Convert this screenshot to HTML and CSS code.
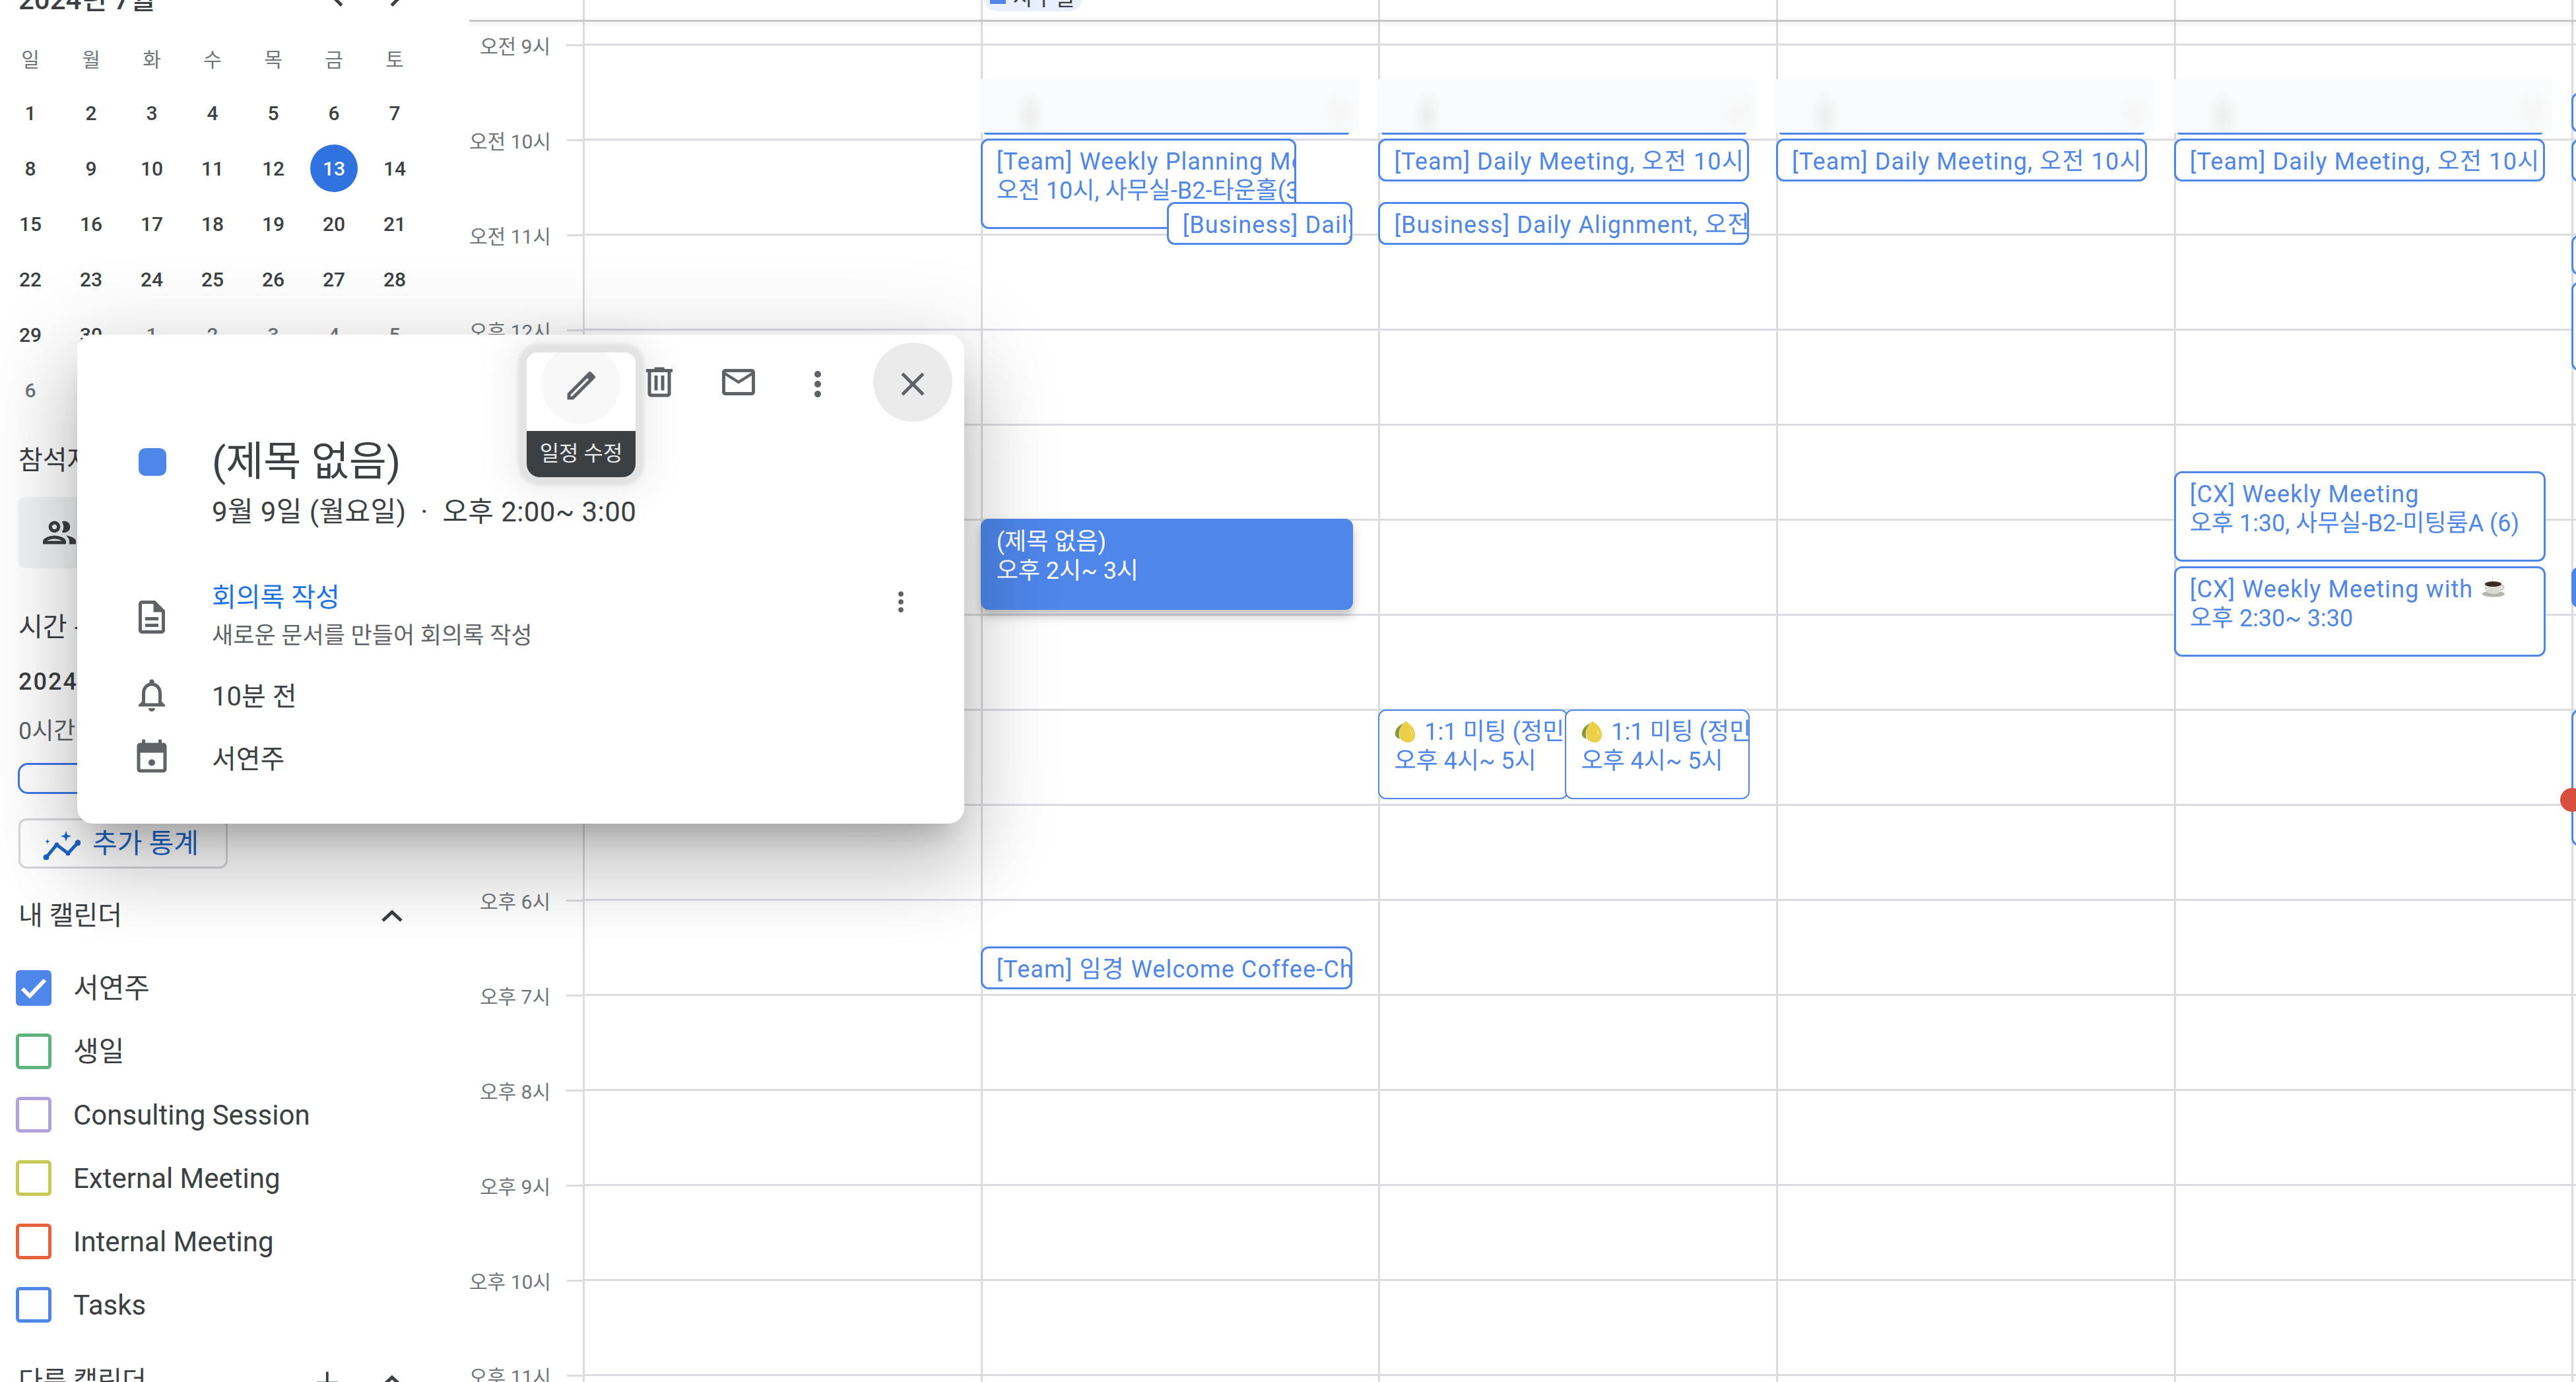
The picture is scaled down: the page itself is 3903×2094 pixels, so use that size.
FILE: index.html
```html
<!DOCTYPE html>
<html lang="ko">
<head>
    <meta charset="UTF-8">
    <title>Calendar</title>
    <link rel="stylesheet" href="styles.css">
</head>
<body>
<div class="page">
    <aside class="sidebar">
        <div class="mini-head">
            <span class="mini-title">2024년 7월</span>
            <svg class="mini-arrow arrow-prev" viewBox="0 0 24 24"><path d="M15.4 7.4 14 6l-6 6 6 6 1.4-1.4L10.8 12z"/></svg>
            <svg class="mini-arrow arrow-next" viewBox="0 0 24 24"><path d="M8.6 16.6 10 18l6-6-6-6-1.4 1.4L13.2 12z"/></svg>
        </div>
        <div class="mini-grid">
            <span class="wd">일</span><span class="wd">월</span><span class="wd">화</span><span class="wd">수</span><span class="wd">목</span><span class="wd">금</span><span class="wd">토</span>
            <span>1</span><span>2</span><span>3</span><span>4</span><span>5</span><span>6</span><span>7</span>
            <span>8</span><span>9</span><span>10</span><span>11</span><span>12</span><span><b class="today">13</b></span><span>14</span>
            <span>15</span><span>16</span><span>17</span><span>18</span><span>19</span><span>20</span><span>21</span>
            <span>22</span><span>23</span><span>24</span><span>25</span><span>26</span><span>27</span><span>28</span>
            <span>29</span><span>30</span><span class="dim">1</span><span class="dim">2</span><span class="dim">3</span><span class="dim">4</span><span class="dim">5</span>
            <span class="dim">6</span><span class="dim">7</span><span class="dim">8</span><span class="dim">9</span><span class="dim">10</span><span class="dim">11</span><span class="dim">12</span>
        </div>

        <div class="side-title people-title">참석자 검색</div>
        <div class="people-box">
            <svg viewBox="0 0 24 24"><path d="M9 13.75c-2.34 0-7 1.17-7 3.5V19h14v-1.75c0-2.33-4.66-3.5-7-3.5zM4.34 17c.84-.58 2.87-1.25 4.66-1.25s3.82.67 4.66 1.25H4.34zM9 12c1.93 0 3.5-1.57 3.5-3.5S10.93 5 9 5 5.5 6.57 5.5 8.5 7.07 12 9 12zm0-5c.83 0 1.5.67 1.5 1.5S9.83 10 9 10s-1.5-.67-1.5-1.5S8.17 7 9 7zm7.04 6.81c1.16.84 1.96 1.96 1.96 3.44V19h4v-1.75c0-2.02-3.5-3.17-5.96-3.44zM15 12c1.93 0 3.5-1.57 3.5-3.5S16.93 5 15 5c-.54 0-1.04.13-1.5.35.63.89 1 1.98 1 3.15s-.37 2.26-1 3.15c.46.22.96.35 1.5.35z"/></svg>
        </div>
        <div class="side-title time-title">시간 통계</div>
        <div class="stat-date">2024년 7월</div>
        <div class="stat-hours">0시간</div>
        <div class="stat-bar"></div>
        <div class="stat-button">
            <svg viewBox="0 0 60 50">
                <path class="spark-line" d="M8 46 24 27 41 40 56 24"/>
                <circle cx="8" cy="46" r="4.5"/><circle cx="24" cy="27" r="3.5"/><circle cx="41" cy="40" r="3.5"/><circle cx="56" cy="24" r="4.5"/>
                <path d="M38 6l2 6 6 2-6 2-2 6-2-6-6-2 6-2zM10 18l1 3 3 1-3 1-1 3-1-3-3-1 3-1z"/>
            </svg>
            <span>추가 통계</span>
        </div>

        <div class="side-title cal-head my-cal-head">
            <span>내 캘린더</span>
            <svg class="chev" viewBox="0 0 34 20"><path d="M3 17 17 4l14 13"/></svg>
        </div>
        <ul class="cal-list">
            <li><i class="check check-blue checked"><svg viewBox="0 0 54 54"><path d="M10 28l11 11 23-24"/></svg></i><span class="ko-label">서연주</span></li>
            <li><i class="check check-green"></i><span class="ko-label">생일</span></li>
            <li><i class="check check-purple"></i>Consulting Session</li>
            <li><i class="check check-lime"></i>External Meeting</li>
            <li><i class="check check-orange"></i>Internal Meeting</li>
            <li><i class="check check-blue"></i>Tasks</li>
        </ul>
        <div class="side-title cal-head other-cal-head">
            <span>다른 캘린더</span>
            <span class="plus">+</span>
            <svg class="chev" viewBox="0 0 34 20"><path d="M3 17 17 4l14 13"/></svg>
        </div>
    </aside>

    <main class="calendar">
        <div class="gutter">
            <div class="hour"><span>오전 9시</span><i></i></div>
            <div class="hour"><span>오전 10시</span><i></i></div>
            <div class="hour"><span>오전 11시</span><i></i></div>
            <div class="hour"><span>오후 12시</span><i></i></div>
            <div class="hour"><span>오후 1시</span><i></i></div>
            <div class="hour"><span>오후 2시</span><i></i></div>
            <div class="hour"><span>오후 3시</span><i></i></div>
            <div class="hour"><span>오후 4시</span><i></i></div>
            <div class="hour"><span>오후 5시</span><i></i></div>
            <div class="hour"><span>오후 6시</span><i></i></div>
            <div class="hour"><span>오후 7시</span><i></i></div>
            <div class="hour"><span>오후 8시</span><i></i></div>
            <div class="hour"><span>오후 9시</span><i></i></div>
            <div class="hour"><span>오후 10시</span><i></i></div>
            <div class="hour"><span>오후 11시</span><i></i></div>
        </div>
        <div class="days">
            <div class="day"></div>

            <div class="day">
                <div class="allday-chip"><i></i>사무실</div>
                <div class="redacted"></div>
                <div class="event ev-planning"><span class="ev-title">[Team] Weekly Planning Meeting</span><br>오전 10시, 사무실-B2-타운홀(32)</div>
                <div class="event ev-business-short"><span class="ev-title">[Business] Daily Alignment, 오전 11시</span></div>
                <div class="event ev-selected">(제목 없음)<br>오후 2시~ 3시</div>
                <div class="event ev-welcome"><span class="ev-title">[Team] 임경 Welcome Coffee-Chat, 오후 7시</span></div>
            </div>

            <div class="day">
                <div class="redacted"></div>
                <div class="event ev-daily"><span class="ev-title">[Team] Daily Meeting, 오전 10시</span></div>
                <div class="event ev-business"><span class="ev-title">[Business] Daily Alignment, 오전 11시</span></div>
                <div class="event ev-one ev-one-a">
                    <svg class="lemon" viewBox="0 0 35 34"><path class="lemon-body" d="M18 1c9 5 15 14 14 22-1 7-6 10-11 10-7 0-13-5-13-14C8 11 12 5 18 1z"/><path class="lemon-shine" d="M24 12c3 4 4 8 3 12-1-4-2-8-3-12z"/><path class="lemon-leaf" d="M14 4C6 8 1 14 2 22c1 3 4 5 7 5-3-8-1-16 5-23z"/></svg>
                    1:1 미팅 (정민수)<br>오후 4시~ 5시
                </div>
                <div class="event ev-one ev-one-b">
                    <svg class="lemon" viewBox="0 0 35 34"><path class="lemon-body" d="M18 1c9 5 15 14 14 22-1 7-6 10-11 10-7 0-13-5-13-14C8 11 12 5 18 1z"/><path class="lemon-shine" d="M24 12c3 4 4 8 3 12-1-4-2-8-3-12z"/><path class="lemon-leaf" d="M14 4C6 8 1 14 2 22c1 3 4 5 7 5-3-8-1-16 5-23z"/></svg>
                    1:1 미팅 (정민수)<br>오후 4시~ 5시
                </div>
            </div>

            <div class="day">
                <div class="redacted"></div>
                <div class="event ev-daily"><span class="ev-title">[Team] Daily Meeting, 오전 10시</span></div>
            </div>

            <div class="day">
                <div class="redacted"></div>
                <div class="event ev-daily"><span class="ev-title">[Team] Daily Meeting, 오전 10시</span></div>
                <div class="event ev-cx-a"><span class="ev-title">[CX] Weekly Meeting</span><br>오후 1:30, 사무실-B2-미팅룸A (6)</div>
                <div class="event ev-cx-b"><span class="ev-title">[CX] Weekly Meeting with</span> <svg class="coffee" viewBox="0 0 36 32"><path class="coffee-steam" d="M16 1c3 2-2 4 1 7"/><ellipse class="coffee-saucer" cx="18" cy="27" rx="17" ry="4.5"/><path class="coffee-cup" d="M5 12h25v6c0 6-5 9-12 9S5 24 5 18z"/><path class="coffee-handle" d="M29 14c5-1 6 5 0 7"/><ellipse class="coffee-top" cx="17.5" cy="12" rx="12.5" ry="4"/></svg><br>오후 2:30~ 3:30</div>
            </div>

            <div class="day day-last">
                <div class="event edge edge-1"></div>
                <div class="event edge edge-2"></div>
                <div class="event edge edge-3"></div>
                <div class="event edge edge-4"></div>
                <div class="event edge edge-5"></div>
                <div class="event edge edge-6"></div>
                <div class="now-dot"></div>
            </div>
        </div>
        <div class="allday-line"></div>
    </main>

    <section class="popup">
        <div class="toolbar">
            <span class="tool"><svg viewBox="0 0 24 24"><path d="M15 4V3H9v1H4v2h1v13c0 1.1.9 2 2 2h10c1.1 0 2-.9 2-2V6h1V4h-5zm2 15H7V6h10v13zM9 8h2v9H9zm4 0h2v9h-2z"/></svg></span>
            <span class="tool"><svg viewBox="0 0 24 24"><path d="M20 4H4c-1.1 0-2 .9-2 2v12c0 1.1.9 2 2 2h16c1.1 0 2-.9 2-2V6c0-1.1-.9-2-2-2zm0 14H4V8l8 5 8-5v10zm-8-7L4 6h16l-8 5z"/></svg></span>
            <span class="tool tool-low"><svg viewBox="0 0 24 24"><path d="M12 8c1.1 0 2-.9 2-2s-.9-2-2-2-2 .9-2 2 .9 2 2 2zm0 2c-1.1 0-2 .9-2 2s.9 2 2 2 2-.9 2-2-.9-2-2-2zm0 6c-1.1 0-2 .9-2 2s.9 2 2 2 2-.9 2-2-.9-2-2-2z"/></svg></span>
            <span class="tool tool-close tool-low"><svg viewBox="0 0 24 24"><path d="M19 6.41 17.59 5 12 10.59 6.41 5 5 6.41 10.59 12 5 17.59 6.41 19 12 13.41 17.59 19 19 17.59 13.41 12z"/></svg></span>
        </div>

        <div class="edit-tip">
            <div class="edit-face">
                <span class="edit-circle"><svg viewBox="0 0 24 24"><path fill-rule="evenodd" d="M3 17.25V21h3.75L19.6 8.15a1.2 1.2 0 0 0 0-1.7l-2.05-2.05a1.2 1.2 0 0 0-1.7 0zM5 19v-.9L15.1 8l.9.9L5.9 19z"/></svg></span>
            </div>
            <div class="edit-label">일정 수정</div>
        </div>

        <div class="row row-title">
            <div class="row-icon"><i class="color-square"></i></div>
            <h1>(제목 없음)</h1>
        </div>
        <div class="row row-when">
            <div class="row-icon"></div>
            <div>9월 9일 (월요일) &nbsp;·&nbsp; 오후 2:00~ 3:00</div>
        </div>
        <div class="row row-notes">
            <div class="row-icon"><svg viewBox="0 0 24 24"><path d="M14 2H6c-1.1 0-2 .9-2 2v16c0 1.1.9 2 2 2h12c1.1 0 2-.9 2-2V8l-6-6zM6 20V4h7v5h5v11H6zm10-2H8v-2h8v2zm0-4H8v-2h8v2z"/></svg></div>
            <div class="notes-text">
                <div class="notes-link">회의록 작성</div>
                <div class="notes-desc">새로운 문서를 만들어 회의록 작성</div>
            </div>
            <svg class="notes-more" viewBox="0 0 24 24"><path d="M12 8c1.1 0 2-.9 2-2s-.9-2-2-2-2 .9-2 2 .9 2 2 2zm0 2c-1.1 0-2 .9-2 2s.9 2 2 2 2-.9 2-2-.9-2-2-2zm0 6c-1.1 0-2 .9-2 2s.9 2 2 2 2-.9 2-2-.9-2-2-2z"/></svg>
        </div>
        <div class="row row-plain row-reminder">
            <div class="row-icon"><svg viewBox="0 0 24 24"><path d="M12 22c1.1 0 2-.9 2-2h-4c0 1.1.9 2 2 2zm6-6v-5c0-3.07-1.63-5.64-4.5-6.32V4c0-.83-.67-1.5-1.5-1.5s-1.5.67-1.5 1.5v.68C7.64 5.36 6 7.92 6 11v5l-2 2v1h16v-1l-2-2zm-2 1H8v-6c0-2.48 1.51-4.5 4-4.5s4 2.02 4 4.5v6z"/></svg></div>
            <div>10분 전</div>
        </div>
        <div class="row row-plain">
            <div class="row-icon"><svg viewBox="0 0 24 24"><path fill-rule="evenodd" d="M19 3h-1V1h-2v2H8V1H6v2H5c-1.11 0-2 .9-2 2v14c0 1.1.89 2 2 2h14c1.1 0 2-.9 2-2V5c0-1.1-.9-2-2-2zm0 16H5V9h14v10z"/><circle cx="12" cy="15" r="2"/></svg></div>
            <div>서연주</div>
        </div>
    </section>
</div>
</body>
</html>
```

FILE: styles.css
```css
* {
    box-sizing: border-box;
}
html, body {
    margin: 0;
    height: 100%;
}
body {
    background: #fff;
    color: #3c4043;
    font-family: Roboto, "Noto Sans CJK KR", sans-serif;
    overflow: hidden;
}
.page {
    position: relative;
    display: flex;
    width: 3903px;
    height: 2094px;
    overflow: hidden;
}

/* left column */
.sidebar {
    flex: none;
    width: 711px;
    height: 2094px;
    overflow: hidden;
}
.mini-head {
    position: relative;
    display: flex;
    align-items: center;
    height: 48px;
    margin-top: -29px;
    padding-left: 28px;
}
.mini-title {
    font-size: 42px;
    font-weight: 500;
}
.mini-arrow {
    position: absolute;
    top: -6px;
    width: 60px;
    height: 60px;
    fill: #3c4043;
}
.arrow-prev {
    left: 481px;
}
.arrow-next {
    left: 570px;
}
.mini-grid {
    display: grid;
    grid-template-columns: repeat(7, 92px);
    grid-template-rows: 82px repeat(6, 84px);
    margin-top: 28px;
    font-size: 30px;
    font-weight: 500;
}
.mini-grid span {
    display: flex;
    align-items: center;
    justify-content: center;
}
.mini-grid .wd {
    color: #70757a;
    font-weight: 400;
}
.mini-grid .dim {
    color: #70757a;
}
.today {
    display: flex;
    align-items: center;
    justify-content: center;
    width: 72px;
    height: 72px;
    border-radius: 50%;
    background: #3073e0;
    color: #fff;
    font-weight: 500;
}
.side-title {
    padding-left: 28px;
    height: 50px;
    line-height: 50px;
    font-size: 40px;
    white-space: nowrap;
}
.people-title {
    margin-top: 40px;
}
.people-box {
    display: flex;
    align-items: center;
    width: 400px;
    height: 108px;
    margin: 30px 0 0 27px;
    padding-left: 33px;
    background: #f1f3f4;
    border-radius: 12px;
}
.people-box svg {
    width: 60px;
    height: 60px;
    fill: #3c4043;
}
.time-title {
    margin-top: 65px;
}
.stat-date {
    margin-top: 35px;
    padding-left: 28px;
    height: 44px;
    line-height: 44px;
    font-size: 36px;
    font-weight: 500;
    letter-spacing: 2px;
}
.stat-hours {
    margin-top: 31px;
    padding-left: 28px;
    height: 44px;
    line-height: 44px;
    font-size: 36px;
    color: #5f6368;
}
.stat-bar {
    width: 400px;
    height: 47px;
    margin: 26px 0 0 27px;
    border: 3px solid #3b78e7;
    border-radius: 15px;
}
.stat-button {
    display: flex;
    align-items: center;
    gap: 18px;
    width: 317px;
    height: 76px;
    margin: 37px 0 0 28px;
    padding-left: 31px;
    border: 3px solid #d4d6d9;
    border-radius: 12px;
    color: #1b66c9;
    font-size: 41px;
}
.stat-button span {
    margin-top: -8px;
}
.stat-button svg {
    flex: none;
    width: 60px;
    height: 50px;
    fill: #1b66c9;
}
.spark-line {
    fill: none;
    stroke: #1b66c9;
    stroke-width: 5;
}
.cal-head {
    position: relative;
    display: flex;
    align-items: center;
}
.my-cal-head {
    margin-top: 47px;
}
.chev {
    position: absolute;
    left: 577px;
    top: 15px;
    width: 34px;
    height: 20px;
    fill: none;
    stroke: #3c4043;
    stroke-width: 5;
}
.cal-list {
    list-style: none;
    margin: 36px 0 0;
    padding: 0;
}
.cal-list li {
    display: flex;
    align-items: center;
    height: 96px;
    padding-left: 24px;
    font-size: 42px;
    white-space: nowrap;
}
.ko-label {
    margin-top: -8px;
}
.check {
    flex: none;
    width: 54px;
    height: 54px;
    margin-right: 33px;
    border: 5px solid;
    border-radius: 6px;
}
.check-blue {
    border-color: #4f86ea;
}
.check-green {
    border-color: #5cb57f;
}
.check-purple {
    border-color: #b1a0dc;
}
.check-lime {
    border-color: #c7c952;
}
.check-orange {
    border-color: #e9613a;
}
.checked {
    background: #4f86ea;
    border: 0;
}
.checked svg {
    display: block;
    fill: none;
    stroke: #fff;
    stroke-width: 6;
}
.other-cal-head {
    margin-top: 43px;
}
.plus {
    position: absolute;
    left: 478px;
    top: -2px;
    font-size: 64px;
    font-weight: 300;
    line-height: 60px;
}

/* time grid */
.calendar {
    position: relative;
    flex: 1;
    display: flex;
    min-width: 0;
}
.gutter {
    flex: none;
    width: 175px;
    padding-top: 67px;
    border-right: 3px solid #dadce0;
}
.hour {
    display: flex;
    justify-content: flex-end;
    gap: 24px;
    height: 144px;
}
.hour span {
    height: 36px;
    margin-top: -14px;
    line-height: 36px;
    font-size: 30px;
    color: #70757a;
    white-space: nowrap;
}
.hour i {
    width: 25px;
    height: 3px;
    background: #dadce0;
}
.days {
    flex: 1;
    display: flex;
    min-width: 0;
    background-image: repeating-linear-gradient(#dadce0 0 3px, transparent 3px 144px);
    background-position: 0 66px;
    background-repeat: no-repeat;
    background-size: 100% 2100px;
}
.day {
    position: relative;
    flex: none;
    width: 602.7px;
    height: 2094px;
    border-right: 3px solid #dadce0;
}
.day-last {
    border-right: 0;
    width: 10px;
}
.allday-line {
    position: absolute;
    top: 30px;
    left: 0;
    right: 0;
    height: 3px;
    background: #c6c7c8;
    box-shadow: 0 3px 6px rgba(0, 0, 0, .1);
}
.allday-chip {
    position: absolute;
    left: 2px;
    top: -30px;
    display: flex;
    align-items: center;
    gap: 11px;
    width: 149px;
    height: 47px;
    padding-left: 9px;
    border-radius: 0 0 20px 20px;
    background: #e8effe;
    font-size: 34px;
}
.allday-chip i {
    width: 24px;
    height: 24px;
    background: #4f86ea;
}
.redacted {
    position: absolute;
    left: -5px;
    top: 120px;
    width: 575px;
    height: 81px;
    background:
        radial-gradient(ellipse 24px 42px at 76px 56px, #ecedec, rgba(236, 237, 236, 0)),
        radial-gradient(ellipse 30px 40px at 545px 50px, #f6f6f6, rgba(246, 246, 246, 0)),
        #fafbfc;
}
.redacted::after {
    content: "";
    position: absolute;
    left: 7px;
    right: 15px;
    bottom: -3px;
    height: 3px;
    border-radius: 0 0 6px 6px;
    background: #4f86ea;
}

/* events */
.event {
    position: absolute;
    left: -3px;
    overflow: hidden;
    padding: 10px 0 0 21px;
    background: #fff;
    border: 3px solid #4f86ea;
    border-radius: 12px;
    color: #4f86ea;
    font-size: 36px;
    line-height: 44px;
    white-space: nowrap;
}
.ev-title {
    letter-spacing: 1.1px;
}
.ev-planning {
    top: 210px;
    width: 478px;
    height: 137px;
}
.ev-business-short {
    top: 306px;
    left: 279px;
    width: 281px;
    height: 65px;
}
.ev-selected {
    top: 786px;
    width: 564px;
    height: 138px;
    padding-top: 10px;
    background: #4f86ea;
    color: #fff;
    box-shadow: 0 9px 15px rgba(0, 0, 0, .25);
}
.ev-welcome {
    top: 1434px;
    width: 563px;
    height: 65px;
}
.ev-daily {
    top: 210px;
    width: 562px;
    height: 65px;
}
.ev-business {
    top: 306px;
    width: 562px;
    height: 65px;
}
.ev-one {
    top: 1075px;
    height: 136px;
    border-width: 2px;
    padding: 10px 0 0 22px;
}
.ev-one-a {
    width: 288px;
}
.ev-one-b {
    left: 280px;
    width: 280px;
}
.ev-cx-a {
    top: 714px;
    width: 563px;
    height: 137px;
}
.ev-cx-b {
    top: 858px;
    width: 563px;
    height: 137px;
}
.lemon {
    width: 35px;
    height: 34px;
    margin-right: 2px;
    vertical-align: -5px;
}
.lemon-body {
    fill: #edd04a;
}
.lemon-shine {
    fill: #f7e88c;
}
.lemon-leaf {
    fill: #7f9a3a;
}
.coffee {
    width: 36px;
    height: 32px;
    margin-left: 4px;
    vertical-align: 0;
}
.coffee-steam {
    fill: none;
    stroke: #ddd;
    stroke-width: 1.5;
}
.coffee-saucer {
    fill: #b5b3ad;
}
.coffee-cup {
    fill: #dcdad4;
}
.coffee-handle {
    fill: none;
    stroke: #c9c7c1;
    stroke-width: 2.5;
}
.coffee-top {
    fill: #3a2c24;
}
.edge {
    width: 60px;
    padding: 0;
}
.edge-1 {
    top: 140px;
    height: 61px;
}
.edge-2 {
    top: 211px;
    height: 65px;
}
.edge-3 {
    top: 356px;
    height: 61px;
}
.edge-4 {
    top: 427px;
    height: 135px;
}
.edge-5 {
    top: 859px;
    height: 62px;
    background: #4f86ea;
}
.edge-6 {
    top: 1075px;
    height: 207px;
}
.now-dot {
    position: absolute;
    left: -20px;
    top: 1194px;
    width: 36px;
    height: 36px;
    border-radius: 50%;
    background: #d84f3f;
}

/* event details popup */
.popup {
    position: absolute;
    left: 117px;
    top: 507px;
    width: 1344px;
    height: 741px;
    background: #fff;
    border-radius: 24px;
    box-shadow:
        0 72px 114px 9px rgba(0, 0, 0, .14),
        0 27px 138px 24px rgba(0, 0, 0, .12),
        0 33px 45px -21px rgba(0, 0, 0, .2);
    font-size: 42px;
}
.toolbar {
    display: flex;
    justify-content: flex-end;
    padding: 12px 18px 0 0;
}
.tool {
    display: flex;
    align-items: center;
    justify-content: center;
    width: 120px;
    height: 120px;
}
.tool svg, .edit-circle svg {
    width: 60px;
    height: 60px;
    fill: #5f6368;
}
.tool-low svg {
    margin-top: 6px;
}
.tool-close {
    margin-left: 24px;
    border-radius: 50%;
    background: #ebebeb;
}
.edit-tip {
    position: absolute;
    left: 681px;
    top: 27px;
    width: 165px;
    height: 189px;
    border-radius: 16px 16px 20px 20px;
    box-shadow: 0 0 5px 13px #e3e3e3, 0 0 60px 24px rgba(0, 0, 0, .07);
}
.edit-face {
    position: relative;
    height: 119px;
    overflow: hidden;
    border-radius: 16px 16px 0 0;
    background: #fff;
}
.edit-circle {
    position: absolute;
    left: 22px;
    top: -12px;
    display: flex;
    align-items: center;
    justify-content: center;
    width: 120px;
    height: 120px;
    padding: 2px 0 0 3px;
    border-radius: 50%;
    background: #f8f8f8;
}
.edit-label {
    height: 70px;
    line-height: 68px;
    border-radius: 0 0 20px 20px;
    background: #3c4043;
    color: #e8eaed;
    font-size: 32px;
    text-align: center;
    white-space: nowrap;
}
.row {
    display: flex;
    align-items: center;
    padding: 0 72px 0 93px;
}
.row-icon {
    flex: none;
    display: flex;
    align-items: center;
    width: 111px;
}
.row-icon svg {
    width: 60px;
    height: 60px;
    margin: 2px 0 0 -10px;
    fill: #5f6368;
}
.color-square {
    width: 42px;
    height: 42px;
    border-radius: 10px;
    background: #4f86ea;
}
.row-title {
    height: 80px;
    margin-top: 21px;
}
.row-title h1 {
    margin: 0;
    font-size: 62px;
    font-weight: 400;
    line-height: 80px;
}
.row-when {
    height: 56px;
    margin-top: 3px;
    letter-spacing: .4px;
}
.row-notes {
    margin-top: 79px;
}
.notes-text {
    flex: 1;
}
.notes-link {
    height: 56px;
    line-height: 56px;
    font-size: 40px;
    color: #1a73e8;
}
.notes-desc {
    height: 50px;
    margin-top: 5px;
    line-height: 50px;
    font-size: 35px;
    color: #5f6368;
}
.notes-more {
    align-self: flex-start;
    width: 48px;
    height: 48px;
    margin-top: 10px;
    fill: #5f6368;
}
.row-plain {
    height: 56px;
    margin-top: 39px;
    font-size: 40px;
}
.row-reminder {
    margin-top: 35px;
}
```
